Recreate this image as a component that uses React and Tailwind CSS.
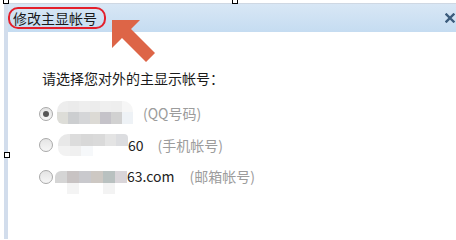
import React from 'react';

const font = { fontFamily: '"Noto Sans CJK SC", "Noto Sans", sans-serif' };

// pixelated blur blocks covering the account names
const mosaics = [
  {
    wrap: 'w-[76px] mb-[3px] rounded-t-[10px] rounded-bl-[6px]',
    rows: [
      { h: 'h-[11px]', cells: ['bg-[#ededed]', 'bg-[#ebebeb]', 'bg-[#eeeeee]', 'bg-[#ececec]', 'bg-[#efefef]', 'bg-[#eeeeee]', 'bg-[#f6f6f6]'] },
      { h: 'h-[12px]', cells: ['bg-[#ddddd8]', 'bg-[#ccced0]', 'bg-[#d5d6d8]', 'bg-[#dcdad5]', 'bg-[#c5c3c9]', 'bg-[#d1d1d1]', 'bg-[#eef2f6]'] },
    ],
  },
  {
    wrap: 'w-[70px] rounded-tl-[10px] rounded-bl-[8px] rounded-tr-[4px]',
    rows: [
      { h: 'h-[12px]', cells: ['bg-[#e8e8e8]', 'bg-[#dcdcdc]', 'bg-[#d8d8d8]', 'bg-[#dadada]', 'bg-[#e4e4e4]', 'bg-[#dcdde0]'] },
      { h: 'h-[10px]', cells: ['bg-[#f2f2f2]', 'bg-[#f0f0f0]', 'bg-[#f6f8fa]', 'bg-white', 'bg-white', 'bg-white'] },
    ],
  },
  {
    wrap: 'w-[72px] mt-[11px] rounded-l-[6px]',
    rows: [
      { h: 'h-[12px]', cells: ['bg-[#d5d5d5]', 'bg-[#c8c3c3]', 'bg-[#c9c9cd]', 'bg-[#cdc8c3]', 'bg-[#b9c1c0]', 'bg-[#d9d5d9]'] },
      { h: 'h-[11px]', cells: ['bg-white', 'bg-[#f4f4f4]', 'bg-white', 'bg-white', 'bg-[#f3f3f3]', 'bg-white'] },
    ],
  },
];

function Mosaic({ m }) {
  return (
    <div className={`flex flex-col overflow-hidden blur-[0.6px] ${m.wrap}`}>
      {m.rows.map((r, i) => (
        <div key={i} className={`flex ${r.h}`}>
          {r.cells.map((c, j) => (
            <div key={j} className={`flex-1 ${c}`} />
          ))}
        </div>
      ))}
    </div>
  );
}

function Radio({ checked }) {
  return (
    <span className="w-[14px] h-[14px] shrink-0 rounded-full border border-[#a9a9a9] bg-gradient-to-b from-[#e4e4e4] to-[#f6f6f6] flex items-center justify-center">
      {checked && <span className="w-[6px] h-[6px] rounded-full bg-[#555555]" />}
    </span>
  );
}

const rows = [
  { checked: true, tail: '', tailGap: 'ml-[10px]', label: '(QQ号码)', blockMl: 'ml-[4px]' },
  { checked: false, tail: '60', tailGap: 'ml-[14px]', label: '(手机帐号)', blockMl: 'ml-[5px]' },
  { checked: false, tail: '63.com', tailGap: 'ml-[15px]', label: '(邮箱帐号)', blockMl: 'ml-[2px]' },
];

export default function App() {
  return (
    <div className="w-[456px] h-[239px] bg-white pt-[3px] pl-[4px] flex relative overflow-hidden" style={font}>
      <div className="w-[4px] bg-[#d2ddec]" />
      <div className="flex-1 flex flex-col">
        <div className="h-[29px] bg-gradient-to-b from-[#d8e7f5] to-[#c5dcf1] border-t border-[#cfd8e3] flex items-center justify-between">
          <div className="h-[22px] rounded-[10px] border-2 border-[#e3202c] pl-[3px] pr-[7px] flex items-center text-[14px] text-[#1a1a1a] leading-none">
            修改主显帐号
          </div>
          <svg width="10" height="10" viewBox="0 0 10 10" className="mr-[1px] mb-[1px]">
            <path d="M1.5 1.5 L8.5 8.5 M8.5 1.5 L1.5 8.5" stroke="#3c5c7c" strokeWidth="2.4" strokeLinecap="square" />
          </svg>
        </div>
        <div className="flex-1 pl-[31px] pt-[36px]">
          <div className="h-[20px] pl-[3px] flex items-center text-[14px] text-[#1a1a1a]">请选择您对外的主显示帐号：</div>
          <div className="mt-[10px]">
            {rows.map((r, i) => (
              <div key={i} className="h-[31.5px] flex items-center text-[14px]">
                <Radio checked={r.checked} />
                <div className={r.blockMl}>
                  <Mosaic m={mosaics[i]} />
                </div>
                {r.tail && <span className="text-[#222222]">{r.tail}</span>}
                <span className={`${r.tailGap} text-[#9c9c9c]`}>{r.label}</span>
              </div>
            ))}
          </div>
        </div>
      </div>

      {/* screenshot annotation: arrow + selection handles */}
      <svg className="absolute left-0 top-0 pointer-events-none" width="456" height="239">
        <polygon points="112,20 140,20 131,29 155,53 146,62 122,38 112,48" fill="#dd6547" />
      </svg>
      <span className="absolute left-[3px] top-[-2px] w-[6px] h-[6px] border border-black bg-white" />
      <span className="absolute left-[232px] top-[-2px] w-[6px] h-[6px] border border-black bg-white" />
      <span className="absolute left-[4px] top-[152px] w-[6px] h-[6px] border border-black bg-white" />
    </div>
  );
}
